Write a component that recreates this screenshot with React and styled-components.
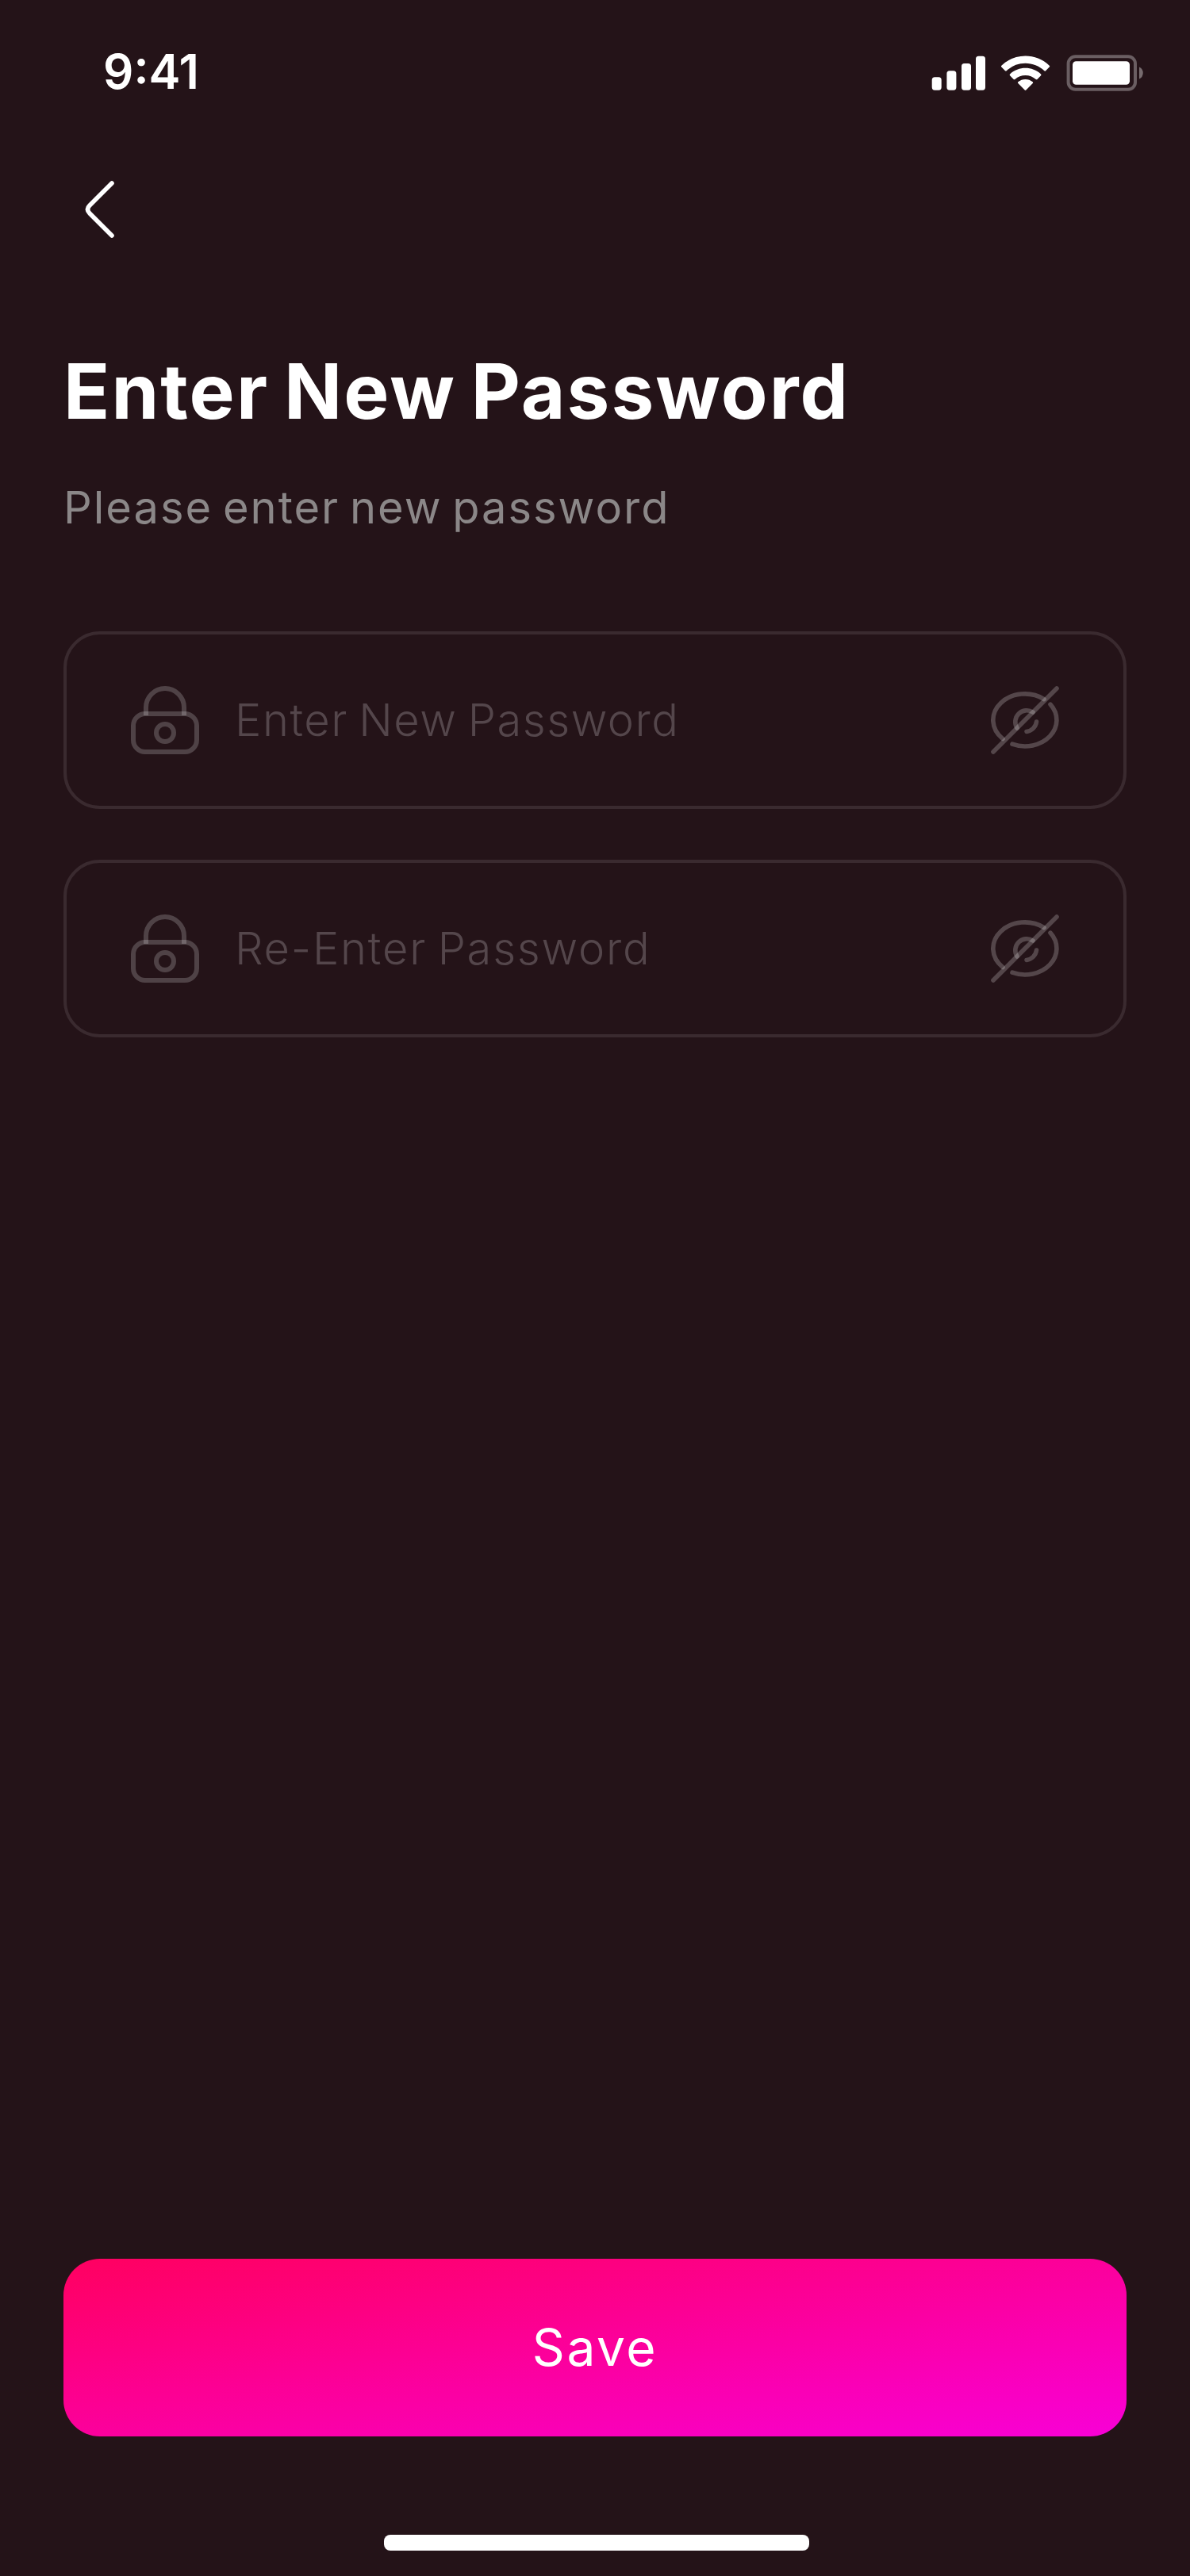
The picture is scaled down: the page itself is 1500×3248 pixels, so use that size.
import React from "react";
import styled, { createGlobalStyle } from "styled-components";

const GlobalStyle = createGlobalStyle`
  *, *::before, *::after { box-sizing: border-box; }
  html, body { margin: 0; padding: 0; background: #241318; }
  body { font-family: Inter, "Liberation Sans", sans-serif; color: #fff; }
  svg { display: block; flex: none; }
`;

const Screen = styled.div`
  display: flex;
  flex-direction: column;
  width: 1500px;
  height: 3248px;
  background: #241318;
  overflow: hidden;
`;

const StatusBar = styled.header`
  display: flex;
  justify-content: space-between;
  align-items: flex-start;
  height: 176px;
  padding: 54px 56px 0 130px;
`;

const Clock = styled.time`
  font-size: 60px;
  line-height: 72px;
  font-weight: 600;
  letter-spacing: 0;
`;

const Indicators = styled.div`
  display: flex;
  align-items: center;
  gap: 20px;
  margin-top: 14px;
`;

const NavBar = styled.nav`
  display: flex;
  padding: 40px 80px 0;
`;

const IconButton = styled.button`
  display: flex;
  width: 96px;
  height: 96px;
  padding: 0;
  border: 0;
  background: none;
  color: inherit;
`;

const Content = styled.main`
  display: flex;
  flex-direction: column;
  flex: 1;
  padding: 109px 80px 0;
`;

const Title = styled.h1`
  margin: 0 0 33px;
  font-size: 96px;
  line-height: 144px;
  font-weight: 700;
  letter-spacing: 2.1px;
  word-spacing: -6px;
  white-space: nowrap;
`;

const Subtitle = styled.p`
  margin: 0 0 114px;
  color: #8b8788;
  font-size: 56px;
  line-height: 84px;
  font-weight: 400;
  letter-spacing: 2px;
  word-spacing: -5px;
  white-space: nowrap;
`;

const Form = styled.div`
  display: flex;
  flex-direction: column;
  gap: 64px;
`;

const Field = styled.label`
  display: flex;
  align-items: center;
  height: 224px;
  padding: 0 76px;
  border: 4px solid #3a2a2f;
  border-radius: 46px;
`;

const Placeholder = styled.span`
  flex: 1;
  padding-left: 40px;
  color: #54464b;
  font-size: 56px;
  line-height: 84px;
  font-weight: 300;
  letter-spacing: ${(p) => p.$tracking}px;
  word-spacing: -4px;
  white-space: nowrap;
`;

const Footer = styled.footer`
  display: flex;
  flex-direction: column;
  align-items: center;
  padding: 0 80px 32px;
`;

const SaveButton = styled.button`
  width: 100%;
  height: 224px;
  margin-bottom: 124px;
  padding: 0;
  border: 0;
  border-radius: 46px;
  background: linear-gradient(to bottom right, #ff0060, #f800d7);
  color: #fff;
  font-family: inherit;
  font-size: 64px;
  line-height: 96px;
  font-weight: 400;
  letter-spacing: 2.6px;
`;

const HomeIndicator = styled.div`
  width: 536px;
  height: 20px;
  margin-left: 4px;
  border-radius: 8px;
  background: #fff;
`;

const SignalIcon = () => (
  <svg width="70" height="48" viewBox="0 0 70 48" fill="#fff">
    <rect x="2.7" y="29.3" width="12" height="16.4" rx="3.6" />
    <rect x="21.4" y="21.3" width="12" height="24.4" rx="3.6" />
    <rect x="40" y="12" width="12" height="33.7" rx="3.6" />
    <rect x="58" y="2.7" width="12" height="43" rx="3.6" />
  </svg>
);

const WifiIcon = () => (
  <svg width="62" height="48" viewBox="0 -0.65 15.5 12" fill="#fff">
    <path d="M7.637 2.277c2.216 0 4.347.852 5.953 2.379a.306.306 0 0 0 .433-.004l1.156-1.166a.32.32 0 0 0-.003-.456c-4.215-4.04-10.865-4.04-15.08 0a.32.32 0 0 0-.003.456l1.157 1.166c.119.12.312.122.433.004a8.64 8.64 0 0 1 5.954-2.379Z" />
    <path d="M7.637 6.073c1.217 0 2.391.453 3.294 1.27.122.116.314.113.433-.006l1.155-1.167a.325.325 0 0 0-.005-.459c-2.748-2.556-7.005-2.556-9.753 0a.325.325 0 0 0-.004.459l1.155 1.167c.119.119.311.122.433.006a4.92 4.92 0 0 1 3.292-1.27Z" />
    <path d="M9.95 8.627a.32.32 0 0 0-.01-.456 3.57 3.57 0 0 0-4.607 0 .32.32 0 0 0-.01.456l2.097 2.117a.3.3 0 0 0 .427 0L9.95 8.627Z" />
  </svg>
);

const BatteryIcon = () => (
  <svg width="100" height="48" viewBox="0 0 100 48">
    <rect x="2.6" y="3.3" width="84.4" height="41.4" rx="9" fill="none" stroke="#fff" strokeOpacity="0.32" strokeWidth="4" />
    <rect x="8" y="9.3" width="72" height="29.4" rx="4.5" fill="#fff" />
    <path d="M92 16.5v15a8.3 8.3 0 0 0 0-15Z" fill="#fff" fillOpacity="0.38" />
  </svg>
);

const BackIcon = () => (
  <svg width="96" height="96" viewBox="0 0 96 96" fill="none" stroke="#fff" strokeWidth="5.6" strokeLinecap="round">
    <path d="M61 15 L33 43 Q28 48 33 53 L61 81" />
  </svg>
);

const LockIcon = () => (
  <svg width="96" height="96" viewBox="0 0 96 96" fill="none" stroke="#fff" strokeOpacity="0.2" strokeWidth="6">
    <rect x="8" y="40" width="80" height="48" rx="15" />
    <path d="M24 42 V32 A24 24 0 0 1 72 32 V42" />
    <circle cx="48" cy="64" r="11" />
  </svg>
);

const EyeSlashIcon = () => (
  <svg width="96" height="96" viewBox="0 0 96 96" fill="none" stroke="#fff" strokeOpacity="0.22" strokeWidth="5.6" strokeLinecap="round">
    <path d="M72 21.6 A40 33 0 0 0 20 71.6" />
    <path d="M80 28.2 A40 33 0 0 1 32 78.2" />
    <path d="M58 38 A14.5 14.5 0 0 0 38 58" />
    <path d="M62.5 50 A14.5 14.5 0 0 1 50 62.5" />
    <path d="M88 8 L8 88" />
  </svg>
);

const PasswordField = ({ text, tracking }) => (
  <Field>
    <LockIcon />
    <Placeholder $tracking={tracking}>{text}</Placeholder>
    <EyeSlashIcon />
  </Field>
);

export default function App() {
  return (
    <>
      <GlobalStyle />
      <Screen>
        <StatusBar>
          <Clock>9:41</Clock>
          <Indicators>
            <SignalIcon />
            <WifiIcon />
            <BatteryIcon />
          </Indicators>
        </StatusBar>
        <NavBar>
          <IconButton aria-label="Back">
            <BackIcon />
          </IconButton>
        </NavBar>
        <Content>
          <Title>Enter New Password</Title>
          <Subtitle>Please enter new password</Subtitle>
          <Form>
            <PasswordField text="Enter New Password" tracking={1.55} />
            <PasswordField text="Re-Enter Password" tracking={1.8} />
          </Form>
        </Content>
        <Footer>
          <SaveButton>Save</SaveButton>
          <HomeIndicator />
        </Footer>
      </Screen>
    </>
  );
}
